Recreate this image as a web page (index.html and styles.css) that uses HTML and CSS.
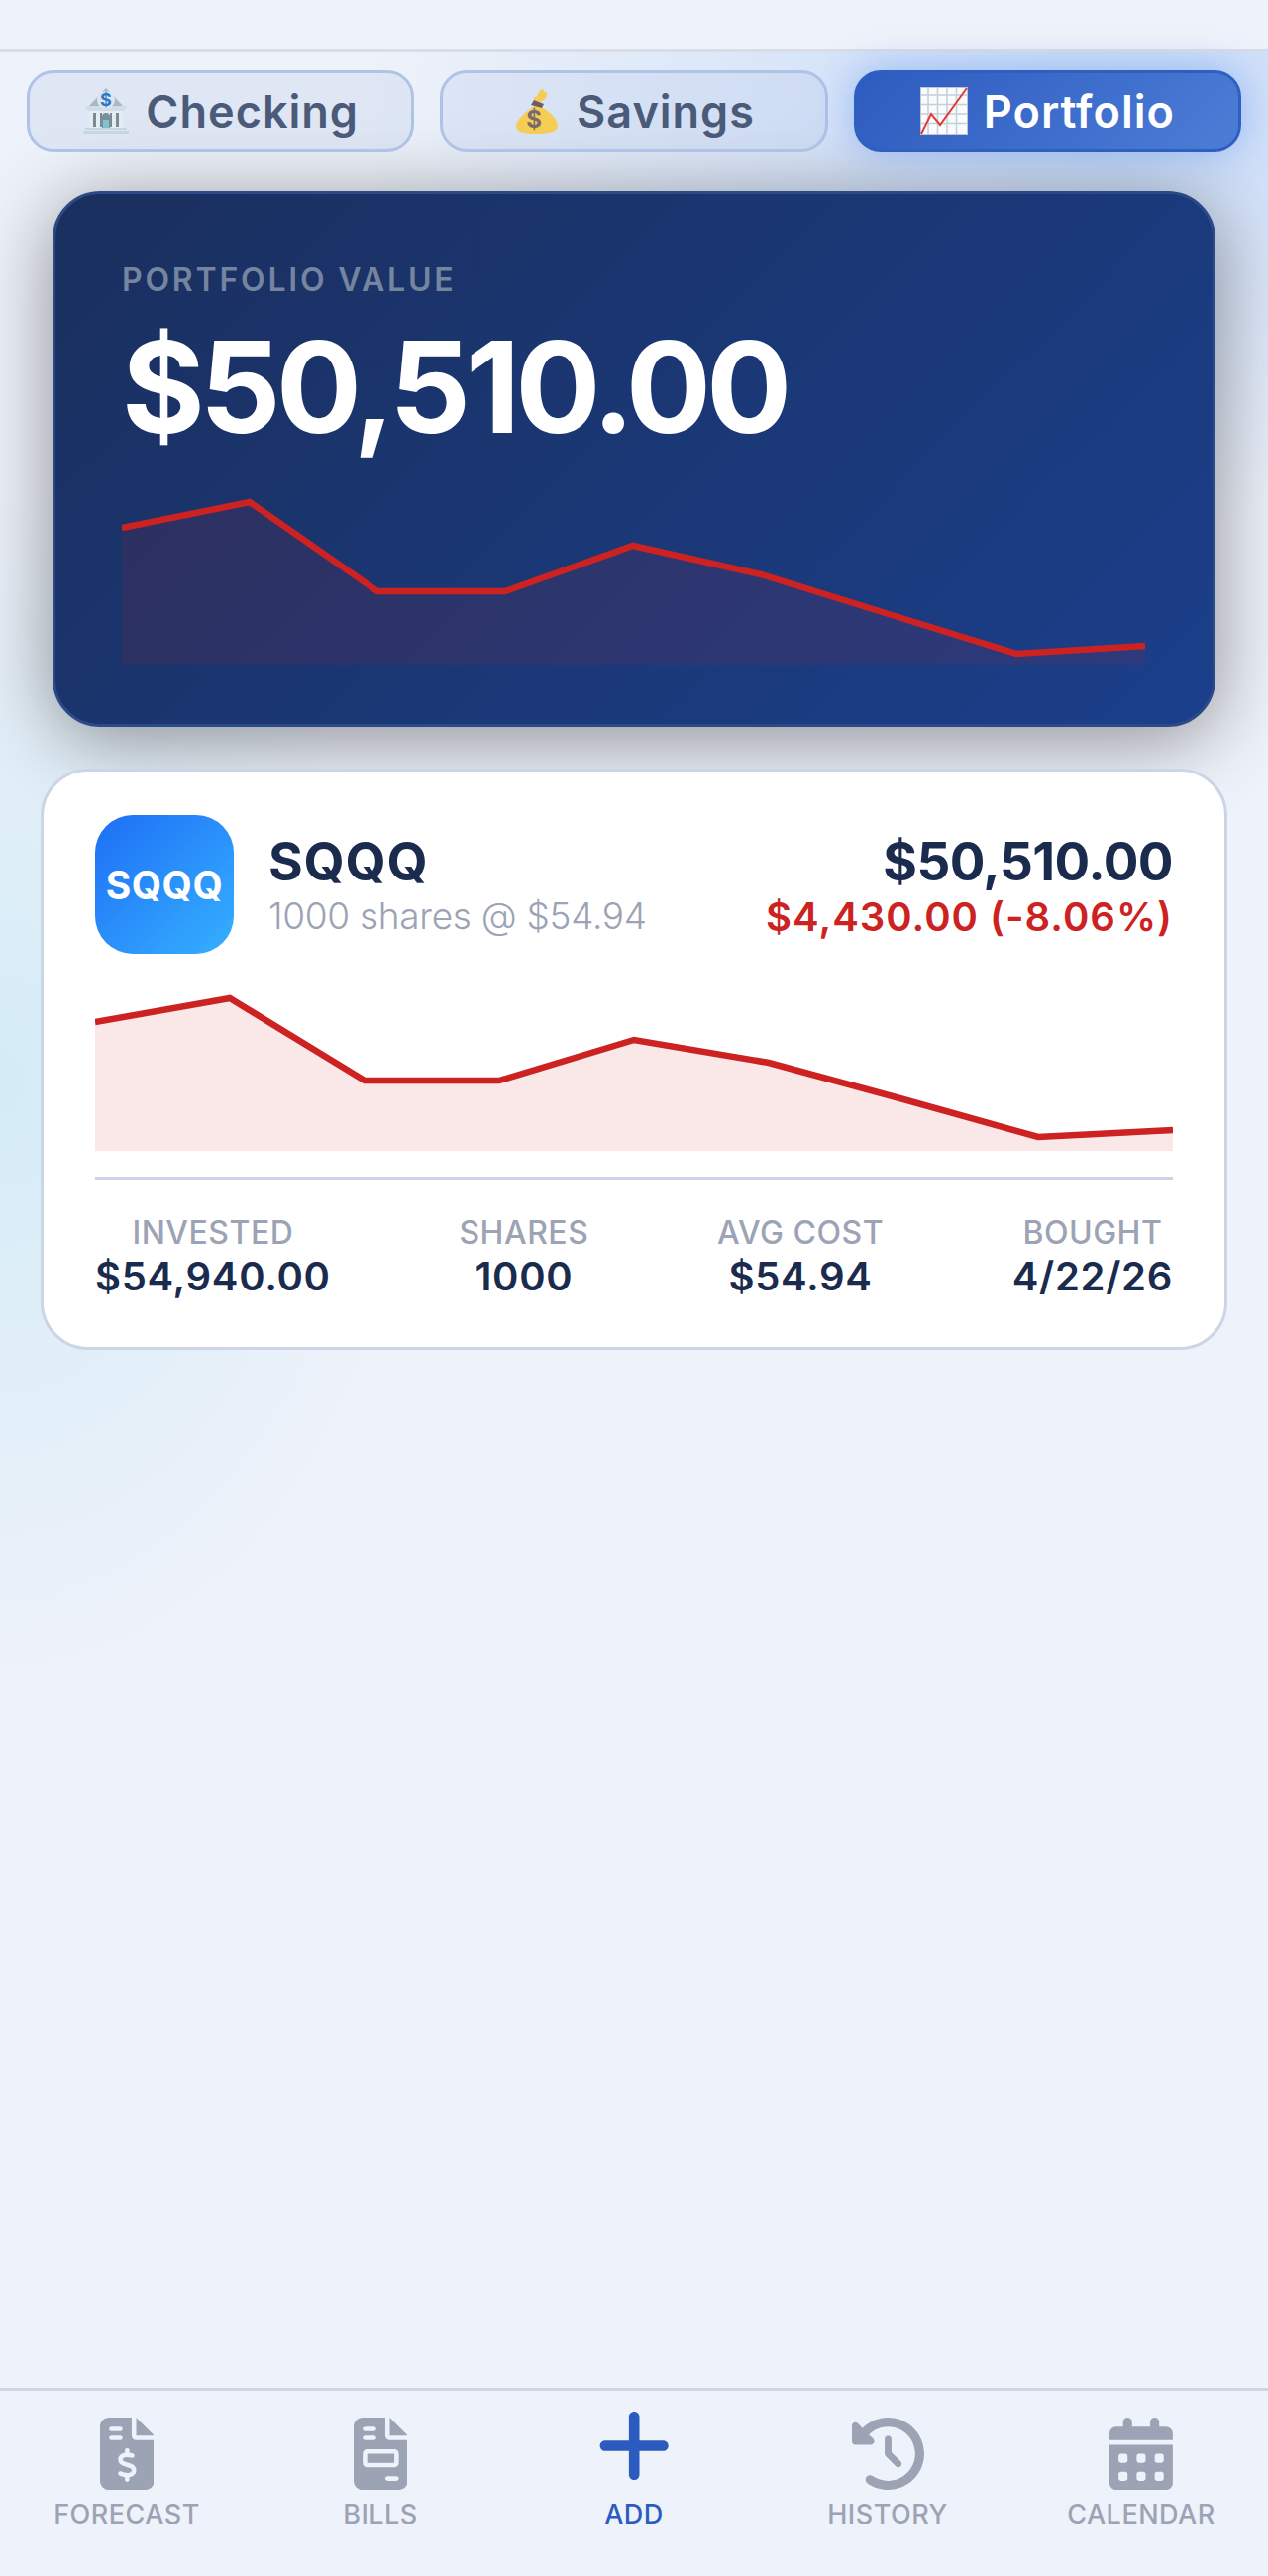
FILE: index.html
```html
<!DOCTYPE html>
<html lang="en">
  <head>
    <meta charset="UTF-8" />
    <meta name="viewport" content="width=device-width, initial-scale=1.0" />
    <title>Portfolio</title>
    <link rel="stylesheet" href="styles.css">
  </head>
  <body>
    <header class="topbar"></header>

    <main class="content">
      <div class="tabs">
        <button class="tab">
          <svg class="emoji" viewBox="0 0 48 48">
            <path d="M24 1 43 21H5z" fill="#a9b8c2"/>
            <path d="M3 19h42v3H3zM5 22h38v2H5z" fill="#cfdde6"/>
            <path d="M7 24h34v17H7z" fill="#e3edf3"/>
            <path d="M11 26h3v14h-3zM34 26h3v14h-3zM18 26h2v14h-2zM28 26h2v14h-2z" fill="#7c8a94"/>
            <path d="M20 30a4 4 0 0 1 8 0v11h-8z" fill="#78909c"/>
            <path d="M21 33h6v8h-6z" fill="#80c3d0"/>
            <path d="M3 41h42v2H3zM1 44h46v3H1z" fill="#c6d6df"/>
            <circle cx="24" cy="13" r="9" fill="#dbe6ee"/>
            <text class="emoji-dollar bank-dollar" x="24" y="19">$</text>
          </svg>
          Checking
        </button>
        <button class="tab">
          <svg class="emoji" viewBox="0 0 48 48">
            <path d="M24 18C14 23 3 33 3 39c0 6 6 8 20 8s22-2 22-8c0-6-8-16-21-21z" fill="#f5cd55"/>
            <path d="M22 14c-2-4 0-5 2-4 1-5 4-8 6-8 1 0 1 2 1 3 2-1 4 1 3 4-1 3-4 4-6 6z" fill="#f5cd55"/>
            <path d="M21 13l10 4-2 4-11-3z" fill="#6f5f63"/>
            <text class="emoji-dollar bag-dollar" x="21" y="41">$</text>
          </svg>
          Savings
        </button>
        <button class="tab active">
          <svg class="emoji" viewBox="0 0 48 48">
            <path d="M0 0h48v48H0z" fill="#f9fbfc"/>
            <path d="M8 0v48M17.5 0v48M27 0v48M36.500 0v48M0 8h48M0 17.500h48M0 27h48M0 36.500h48" stroke="#c4d0d8" stroke-width="1.500" fill="none"/>
            <path d="M.5.5h47v47H.5z" stroke="#b8c6cf" fill="none"/>
            <path d="M1 47 11 27l9 11L47 1" stroke="#e53935" stroke-width="2" fill="none"/>
          </svg>
          Portfolio
        </button>
      </div>

      <section class="total-card">
        <div class="total-label">PORTFOLIO VALUE</div>
        <div class="total-value">$50,510.00</div>
        <svg class="total-chart" viewBox="0 0 1033 171">
          <path class="area" d="M0 33 129 7 258 97H387L516 51 645 80 774 120 903 160 1033 152V171H0Z"/>
          <path class="line" d="M0 33 129 7 258 97H387L516 51 645 80 774 120 903 160 1033 152"/>
        </svg>
      </section>

      <section class="stock-card">
        <div class="stock-head">
          <div class="stock-logo">SQQQ</div>
          <div class="stock-info">
            <div class="stock-name">SQQQ</div>
            <div class="stock-sub">1000 shares @ $54.94</div>
          </div>
          <div class="stock-nums">
            <div class="stock-value">$50,510.00</div>
            <div class="stock-change">$4,430.00 (-8.06%)</div>
          </div>
        </div>
        <svg class="stock-chart" viewBox="0 0 1088 162">
          <path class="area" d="M0 32 136 8 272 91H408L544 50 680 73 816 110 952 148 1088 141V162H0Z"/>
          <path class="line" d="M0 32 136 8 272 91H408L544 50 680 73 816 110 952 148 1088 141"/>
        </svg>
        <div class="stats">
          <div class="stat">
            <div class="stat-label">INVESTED</div>
            <div class="stat-value">$54,940.00</div>
          </div>
          <div class="stat">
            <div class="stat-label">SHARES</div>
            <div class="stat-value">1000</div>
          </div>
          <div class="stat">
            <div class="stat-label">AVG COST</div>
            <div class="stat-value">$54.94</div>
          </div>
          <div class="stat">
            <div class="stat-label">BOUGHT</div>
            <div class="stat-value">4/22/26</div>
          </div>
        </div>
      </section>
    </main>

    <nav class="bottom-nav">
      <a class="nav-item">
        <svg viewBox="0 0 384 512"><path d="M64 0C28.7 0 0 28.7 0 64V448c0 35.300 28.700 64 64 64H320c35.300 0 64-28.700 64-64V160H256c-17.700 0-32-14.300-32-32V0H64zM256 0V128H384L256 0zM64 80c0-8.800 7.200-16 16-16h64c8.800 0 16 7.200 16 16s-7.200 16-16 16H80c-8.800 0-16-7.200-16-16zm0 64c0-8.800 7.200-16 16-16h64c8.800 0 16 7.200 16 16s-7.200 16-16 16H80c-8.800 0-16-7.200-16-16zm128 72c8.800 0 16 7.200 16 16v17.300c8.500 1.200 16.700 3.100 24.100 5.100c8.500 2.300 13.600 11 11.300 19.600s-11 13.600-19.600 11.300c-11.100-3-22-5.200-32.100-5.300c-8.400-.1-17.400 1.800-23.600 5.500c-5.700 3.400-8.100 7.300-8.100 12.800c0 3.700 1.300 6.500 7.300 10.100c6.900 4.100 16.600 7.100 29.200 10.900l.5 .1 0 0 0 0c11.300 3.400 25.300 7.600 36.300 14.600c12.100 7.600 22.400 19.700 22.700 38.200c.3 19.300-9.600 33.300-22.900 41.600c-7.700 4.800-16.400 7.600-25.100 9.100V440c0 8.800-7.200 16-16 16s-16-7.200-16-16V422.200c-11.200-2.100-21.700-5.700-30.900-8.900l0 0c-2.100-.7-4.200-1.400-6.200-2.100c-8.400-2.800-12.900-11.900-10.100-20.200s11.900-12.900 20.200-10.100c2.500 .8 4.800 1.600 7.100 2.400l0 0 0 0 0 0c13.600 4.600 24.600 8.400 36.300 8.700c9.100 .3 17.900-1.700 23.700-5.300c5.100-3.200 7.900-7.300 7.800-14c-.1-4.600-1.800-7.800-7.700-11.600c-6.800-4.300-16.500-7.400-29-11.200l-1.600-.5 0 0c-11-3.300-24.300-7.300-34.800-13.700c-12-7.200-22.600-18.900-22.700-37.300c-.1-19.400 10.800-32.800 23.800-40.500c7.500-4.400 15.800-7.200 24.100-8.700V232c0-8.800 7.200-16 16-16z"/></svg>
        <span>FORECAST</span>
      </a>
      <a class="nav-item">
        <svg viewBox="0 0 384 512"><path d="M64 0C28.700 0 0 28.700 0 64V448c0 35.300 28.700 64 64 64H320c35.300 0 64-28.700 64-64V160H256c-17.700 0-32-14.300-32-32V0H64zM256 0V128H384L256 0zM80 64h64c8.800 0 16 7.200 16 16s-7.200 16-16 16H80c-8.800 0-16-7.200-16-16s7.200-16 16-16zm0 64h64c8.800 0 16 7.200 16 16s-7.200 16-16 16H80c-8.800 0-16-7.200-16-16s7.200-16 16-16zm16 96H288c17.700 0 32 14.300 32 32v64c0 17.700-14.300 32-32 32H96c-17.700 0-32-14.300-32-32V256c0-17.700 14.300-32 32-32zm0 32v64H288V256H96zM240 416h64c8.800 0 16 7.200 16 16s-7.200 16-16 16H240c-8.800 0-16-7.200-16-16s7.200-16 16-16z"/></svg>
        <span>BILLS</span>
      </a>
      <a class="nav-item active">
        <svg viewBox="0 0 448 512"><path d="M256 80c0-17.700-14.300-32-32-32s-32 14.300-32 32V224H48c-17.700 0-32 14.300-32 32s14.300 32 32 32H192V432c0 17.700 14.300 32 32 32s32-14.300 32-32V288H400c17.700 0 32-14.300 32-32s-14.300-32-32-32H256V80z"/></svg>
        <span>ADD</span>
      </a>
      <a class="nav-item">
        <svg viewBox="0 0 512 512"><path d="M75 75L41 41C25.900 25.900 0 36.600 0 57.900V168c0 13.300 10.700 24 24 24H134.100c21.400 0 32.100-25.900 17-41l-30.800-30.800C155 85.500 203 64 256 64c106 0 192 86 192 192s-86 192-192 192c-40.800 0-78.600-12.700-109.700-34.400c-14.500-10.100-34.400-6.600-44.600 7.900s-6.600 34.400 7.900 44.600C151.200 495 201.700 512 256 512c141.400 0 256-114.600 256-256S397.400 0 256 0C185.300 0 121.300 28.700 75 75zm181 53c-13.300 0-24 10.700-24 24V256c0 6.400 2.500 12.500 7 17l72 72c9.400 9.400 24.600 9.400 33.900 0s9.400-24.600 0-33.900l-65-65V152c0-13.300-10.700-24-24-24z"/></svg>
        <span>HISTORY</span>
      </a>
      <a class="nav-item">
        <svg viewBox="0 0 448 512"><path d="M128 0c17.700 0 32 14.300 32 32V64H288V32c0-17.700 14.300-32 32-32s32 14.300 32 32V64h48c26.500 0 48 21.500 48 48v48H0V112C0 85.500 21.500 64 48 64H96V32c0-17.700 14.300-32 32-32zM0 192H448V464c0 26.500-21.500 48-48 48H48c-26.500 0-48-21.500-48-48V192zm64 80v32c0 8.800 7.200 16 16 16h32c8.800 0 16-7.200 16-16V272c0-8.800-7.200-16-16-16H80c-8.800 0-16 7.200-16 16zm128 0v32c0 8.800 7.200 16 16 16h32c8.800 0 16-7.200 16-16V272c0-8.800-7.200-16-16-16H208c-8.800 0-16 7.200-16 16zm144-16c-8.800 0-16 7.200-16 16v32c0 8.800 7.200 16 16 16h32c8.800 0 16-7.200 16-16V272c0-8.800-7.200-16-16-16H336zM64 400v32c0 8.800 7.200 16 16 16h32c8.800 0 16-7.200 16-16V400c0-8.800-7.200-16-16-16H80c-8.800 0-16 7.200-16 16zm144-16c-8.800 0-16 7.200-16 16v32c0 8.800 7.200 16 16 16h32c8.800 0 16-7.200 16-16V400c0-8.800-7.200-16-16-16H208zm112 16v32c0 8.800 7.200 16 16 16h32c8.800 0 16-7.200 16-16V400c0-8.800-7.200-16-16-16H336c-8.800 0-16 7.200-16 16z"/></svg>
        <span>CALENDAR</span>
      </a>
    </nav>
  </body>
</html>
```

FILE: styles.css
```css
* {
  box-sizing: border-box;
}
body {
  margin: 0;
  height: 2601px;
  display: flex;
  flex-direction: column;
  background: #eef2fa;
  font-family: Inter, "Noto Sans", sans-serif;
  color: #1a2b4e;
}
.topbar {
  height: 52px;
  flex: none;
  border-bottom: 3px solid #d9dde8;
}
.content {
  flex: 1;
  padding-top: 19px;
  background:
    radial-gradient(ellipse 760px 420px at 1120px 60px, rgba(70, 140, 240, 0.22), transparent),
    radial-gradient(ellipse 420px 600px at 0 1040px, rgba(64, 200, 230, 0.15), transparent);
}

/* account tabs */
.tabs {
  display: grid;
  grid-template-columns: repeat(3, 1fr);
  gap: 26px;
  margin: 0 27px;
}
.tab {
  height: 82px;
  display: flex;
  align-items: center;
  justify-content: center;
  gap: 16px;
  padding: 0;
  border: 3px solid #afc3e6;
  border-radius: 27px;
  background: rgba(180, 200, 230, 0.26);
  font-family: inherit;
  font-size: 45px;
  font-weight: 600;
  letter-spacing: 1px;
  color: #4a5a78;
}
.tab.active {
  border-color: #2f5fbf;
  background: linear-gradient(135deg, #2d5bbf, #4c7dd6);
  color: #fff;
  box-shadow: 0 0 40px rgba(70, 130, 240, 0.45);
}
.emoji {
  width: 48px;
  height: 48px;
  flex: none;
}
.emoji-dollar {
  font-size: 18px;
  font-weight: 700;
  letter-spacing: 0;
  text-anchor: middle;
}
.bank-dollar {
  fill: #2f78c9;
}
.bag-dollar {
  font-size: 24px;
  fill: #7a6a6a;
}

/* total card */
.total-card {
  height: 541px;
  margin: 40px 53px 0;
  padding: 67px 67px 0;
  border: 3px solid #2c4a85;
  border-radius: 48px;
  background: linear-gradient(135deg, #1a2f5e, #1b3f8b);
  box-shadow: 0 12px 80px rgba(0, 0, 0, 0.42);
}
.total-label {
  font-size: 32px;
  line-height: 40px;
  font-weight: 600;
  letter-spacing: 2.8px;
  color: #75849f;
}
.total-value {
  margin-top: 18px;
  font-size: 128px;
  line-height: 140px;
  font-weight: 700;
  letter-spacing: -5px;
  color: #fff;
}
.total-chart {
  display: block;
  width: 1033px;
  height: 171px;
  margin-top: 39px;
}
.area {
  fill: #cc2222;
  fill-opacity: 0.1;
}
.line {
  fill: none;
  stroke: #cc2222;
  stroke-width: 6.5;
}

/* stock card */
.stock-card {
  position: relative;
  margin: 42px 41px 0;
  padding: 44px 52px 47px;
  border: 3px solid #ccd5e6;
  border-radius: 48px;
  background: #fff;
}
.stock-head {
  display: flex;
  align-items: center;
}
.stock-logo {
  width: 140px;
  height: 140px;
  flex: none;
  display: flex;
  align-items: center;
  justify-content: center;
  margin-right: 35px;
  border-radius: 38px;
  background: linear-gradient(135deg, #1e6ff5, #35b0ff);
  font-size: 39px;
  font-weight: 700;
  letter-spacing: 0.5px;
  color: #fff;
}
.stock-info {
  flex: 1;
}
.stock-name {
  font-size: 53px;
  line-height: 60px;
  font-weight: 700;
  letter-spacing: 0.8px;
}
.stock-sub {
  margin-top: 3px;
  font-size: 37px;
  line-height: 44px;
  font-weight: 300;
  letter-spacing: -0.3px;
  color: #9ca3b4;
}
.stock-nums {
  margin-top: 4px;
  text-align: right;
}
.stock-value {
  font-size: 53px;
  line-height: 60px;
  font-weight: 700;
  letter-spacing: -0.6px;
}
.stock-change {
  margin-top: 2px;
  font-size: 40px;
  line-height: 48px;
  font-weight: 600;
  letter-spacing: 1px;
  color: #cc2222;
}
.stock-chart {
  display: block;
  width: 1088px;
  height: 162px;
  margin-top: 37px;
}
.stats {
  display: flex;
  justify-content: space-between;
  margin-top: 26px;
  padding-top: 35px;
  border-top: 3px solid #ccd5e6;
}
.stat {
  text-align: center;
}
.stat-label {
  font-size: 32px;
  line-height: 38px;
  font-weight: 500;
  letter-spacing: 0.5px;
  color: #9ca3b4;
}
.stat-value {
  margin-top: 1px;
  font-size: 40px;
  line-height: 48px;
  font-weight: 600;
  letter-spacing: 0.7px;
}

/* bottom nav */
.bottom-nav {
  height: 190px;
  flex: none;
  display: grid;
  grid-template-columns: repeat(5, 1fr);
  padding-top: 27px;
  border-top: 3px solid #ccd5e6;
}
.nav-item {
  display: flex;
  flex-direction: column;
  align-items: center;
  font-size: 27px;
  line-height: 32px;
  font-weight: 500;
  letter-spacing: 0.5px;
  color: #9ca3b4;
}
.nav-item svg {
  display: block;
  height: 73px;
  margin-bottom: 9px;
  fill: #9ca3b4;
}
.nav-item.active {
  color: #2c5bbf;
}
.nav-item.active svg {
  height: 85px;
  margin-top: -14px;
  margin-bottom: 11px;
  fill: #2c5bbf;
}
```
